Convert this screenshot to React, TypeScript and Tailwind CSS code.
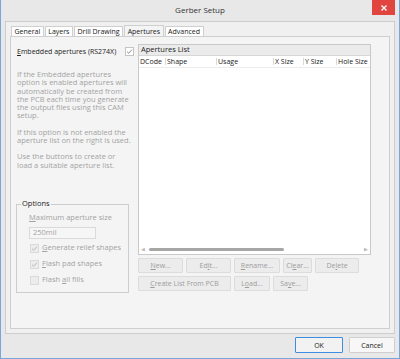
import { PropsWithChildren } from 'react'

function Check({ checked, dim }: { checked?: boolean; dim?: boolean }) {
  return (
    <span
      className={`flex h-[9px] w-[9px] shrink-0 items-center justify-center border ${
        dim ? 'border-[#dadada] bg-[#ececec]' : 'border-[#c4c4c4] bg-white'
      }`}
    >
      {checked && (
        <svg width="7" height="7" viewBox="0 0 8 8">
          <path d="M1.2 4.2 L3.1 6 L6.8 1.8" fill="none" stroke={dim ? '#a8a8a8' : '#6a6a6a'} strokeWidth="0.9" />
        </svg>
      )}
    </span>
  )
}

function U({ children }: PropsWithChildren) {
  return <span className="underline decoration-[0.5px] underline-offset-1">{children}</span>
}

function Btn({ w, children }: PropsWithChildren<{ w: string }>) {
  return (
    <div
      className={`flex h-[15px] items-center justify-center whitespace-nowrap rounded-[1px] border border-[#dcdcdc] bg-[#ececec] text-[7px] text-[#9c9c9c] ${w}`}
    >
      {children}
    </div>
  )
}

function Tab({ label, active }: { label: string; active?: boolean }) {
  return (
    <div
      className={`flex items-center border border-b-0 border-[#cfcfcf] px-[2.5px] ${
        active ? '-mb-px h-[12px] bg-[#f4f4f4]' : 'mt-[1px] h-[10px] bg-white'
      }`}
    >
      {label}
    </div>
  )
}

function App() {
  return (
    <main
      className="flex h-[359px] w-[400px] flex-col border-x border-b border-[#79a6d8] bg-[#e8e8e8] text-[7px] leading-none text-[#222]"
      style={{ fontFamily: '"Open Sans", "Noto Sans", sans-serif' }}
    >
      {/* title bar */}
      <div className="relative flex h-[21px] shrink-0 items-center justify-center pb-[1px] text-[8px] text-[#333]">
        Gerber Setup
        <div className="absolute right-[4px] top-0 flex h-[15px] w-[23px] items-center justify-center bg-[#e0453f] text-white">
          <svg width="6" height="6" viewBox="0 0 6 6">
            <path d="M0.5 0.5 L5.5 5.5 M5.5 0.5 L0.5 5.5" stroke="white" strokeWidth="1.3" />
          </svg>
        </div>
      </div>

      {/* outer panel */}
      <div className="mx-[4px] flex h-[313px] shrink-0 flex-col border border-[#cdcdcd] bg-[#f0f0f0] px-[4px] pb-[4px] pt-[2px]">
        <div className="flex h-[12px] items-end gap-px pl-px">
          <Tab label="General" />
          <Tab label="Layers" />
          <Tab label="Drill Drawing" />
          <Tab label="Apertures" active />
          <Tab label="Advanced" />
        </div>

        {/* tab page */}
        <div className="flex flex-1 border border-[#cfcfcf] bg-[#f4f4f4] pl-[6px] pt-[7px]">
          {/* left column */}
          <div className="flex w-[117px] flex-col">
            <div className="mt-[2px] flex h-[10px] items-center justify-between">
              <span className="whitespace-nowrap">
                <U>E</U>mbedded apertures (RS274X)
              </span>
              <Check checked />
            </div>
            <div className="mt-[14px] flex flex-col gap-[8px] whitespace-nowrap text-[7.5px] leading-[8.3px] text-[#a3a3a3]">
              <p>
                If the Embedded apertures
                <br />
                option is enabled apertures will
                <br />
                automatically be created from
                <br />
                the PCB each time you generate
                <br />
                the output files using this CAM
                <br />
                setup.
              </p>
              <p>
                If this option is not enabled the
                <br />
                aperture list on the right is used.
              </p>
              <p>
                Use the buttons to create or
                <br />
                load a suitable aperture list.
              </p>
            </div>

            <div className="relative mt-auto mb-[35px] ml-[-1px] h-[89px] w-[113px] border border-[#cdcdcd] pl-[12px] pt-[9px] text-[7.5px] text-[#a3a3a3]">
              <span className="absolute left-[4px] top-[-5px] bg-[#f4f4f4] px-px text-[#222]">Options</span>
              <div>
                <U>M</U>aximum aperture size
              </div>
              <div className="mt-[5px] flex h-[12px] w-[67px] items-center border border-[#dadada] bg-[#f6f6f6] pl-[3px]">
                250mil
              </div>
              <div className="mt-[5px] flex flex-col gap-[7px] pl-px">
                <div className="flex items-center gap-[3px]">
                  <Check checked dim />
                  <span>
                    <U>G</U>enerate relief shapes
                  </span>
                </div>
                <div className="flex items-center gap-[3px]">
                  <Check checked dim />
                  <span>
                    <U>F</U>lash pad shapes
                  </span>
                </div>
                <div className="flex items-center gap-[3px]">
                  <Check dim />
                  <span>
                    Flash <U>a</U>ll fills
                  </span>
                </div>
              </div>
            </div>
          </div>

          {/* right column */}
          <div className="ml-[4px] flex w-[233px] flex-col">
            <div className="flex h-[211px] flex-col border border-[#c9c9c9] bg-white">
              <div className="flex h-[11px] items-center border-b border-[#d6d6d6] bg-[#ebebeb] pl-[2px] text-[7.5px]">
                Apertures List
              </div>
              <div className="flex h-[12px] items-center whitespace-nowrap border-b border-[#ececec]">
                <div className="w-[26px] pl-[1px]">DCode</div>
                <div className="w-[51px] border-l border-[#d8d8d8] pl-[1px]">Shape</div>
                <div className="w-[57px] border-l border-[#d8d8d8] pl-[1px]">Usage</div>
                <div className="w-[30px] border-l border-[#d8d8d8] pl-[1px]">X Size</div>
                <div className="w-[33px] border-l border-[#d8d8d8] pl-[1px]">Y Size</div>
                <div className="flex-1 border-l border-[#d8d8d8] pl-[1px]">Hole Size</div>
              </div>
              <div className="flex-1" />
              <div className="flex h-[10px] items-center gap-[4px] px-[2px]">
                <span className="text-[5px] text-[#bbb]">◀</span>
                <div className="h-[3px] w-[135px] rounded-full bg-[#a6a6a6]" />
                <div className="flex-1" />
                <span className="text-[5px] text-[#bbb]">▶</span>
              </div>
            </div>
            <div className="mt-[3px] flex gap-[3px]">
              <Btn w="w-[45px]">
                <span>
                  <U>N</U>ew...
                </span>
              </Btn>
              <Btn w="w-[45px]">
                <span>
                  Ed<U>i</U>t...
                </span>
              </Btn>
              <Btn w="w-[46px]">
                <span>
                  <U>R</U>ename...
                </span>
              </Btn>
              <Btn w="w-[29px]">
                <span>
                  Cl<U>e</U>ar...
                </span>
              </Btn>
              <Btn w="w-[44px]">
                <span>
                  De<U>l</U>ete
                </span>
              </Btn>
            </div>
            <div className="mt-[3px] flex gap-[3px]">
              <Btn w="w-[93px]">
                <span>
                  <U>C</U>reate List From PCB
                </span>
              </Btn>
              <Btn w="w-[36px]">
                <span>
                  L<U>o</U>ad...
                </span>
              </Btn>
              <Btn w="w-[35px]">
                <span>
                  Sa<U>v</U>e...
                </span>
              </Btn>
            </div>
          </div>
        </div>
      </div>

      {/* footer */}
      <div className="flex flex-1 items-start justify-end gap-[6px] pr-[4px] pt-[3px]">
        <div className="flex h-[16px] w-[48px] items-center justify-center rounded-[1px] border border-[#3d8ee0] bg-[#f2f2f2]">
          OK
        </div>
        <div className="flex h-[16px] w-[46px] items-center justify-center rounded-[1px] border border-[#cfcfcf] bg-[#f7f7f7]">
          Cancel
        </div>
      </div>
    </main>
  )
}

export default App
